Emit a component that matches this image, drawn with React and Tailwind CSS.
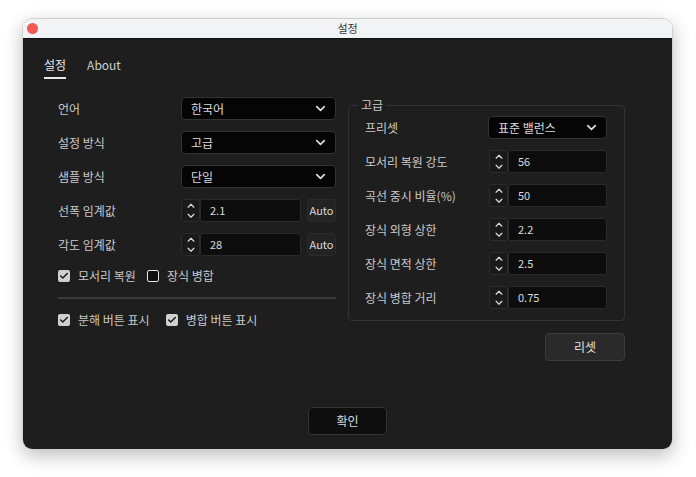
import { ChevronDown, ChevronUp, Check } from 'lucide-react';

const font = { fontFamily: '"Noto Sans CJK KR", "Noto Sans", "Liberation Sans", sans-serif' };

function Select({ value }) {
  return (
    <div className="flex-1 h-[23px] bg-[#050505] border border-[#333] rounded-[4px] flex items-center justify-between pl-[9px] pr-[7px]">
      <span className="text-[12px] text-[#dcdcdc]">{value}</span>
      <ChevronDown size={15} strokeWidth={2.6} className="text-[#e0e0e0]" />
    </div>
  );
}

function Spin({ value }) {
  return (
    <div className="flex-1 flex items-center h-[23px]">
      <div className="w-[19px] h-[23px] bg-[#1a1a1a] border border-[#2c2c2c] rounded-[3px] flex flex-col items-center justify-center">
        <ChevronUp size={12} strokeWidth={2.6} className="text-[#d8d8d8] -mb-[1px]" />
        <ChevronDown size={12} strokeWidth={2.6} className="text-[#d8d8d8] -mt-[1px]" />
      </div>
      <div className="flex-1 h-[23px] bg-[#0d0d0d] border border-[#2a2a2a] rounded-[3px] flex items-center pl-[9px]">
        <span className="text-[11px] text-[#dcdcdc]">{value}</span>
      </div>
    </div>
  );
}

function Row({ label, children, labelW = 'w-[123px]' }) {
  return (
    <div className="flex items-center h-[23px]">
      <div className={`${labelW} shrink-0 text-[12px] text-[#c9c9c9]`}>{label}</div>
      {children}
    </div>
  );
}

function Box({ checked, label }) {
  return (
    <div className="flex items-center">
      {checked ? (
        <div className="w-[12px] h-[12px] rounded-[2px] bg-[#cfcfcf] flex items-center justify-center">
          <Check size={10} strokeWidth={3.5} className="text-[#1a1a1a]" />
        </div>
      ) : (
        <div className="w-[12px] h-[12px] rounded-[2px] border-[1.5px] border-[#e5e5e5] bg-[#111]" />
      )}
      <span className="ml-[8px] text-[12px] text-[#c9c9c9]">{label}</span>
    </div>
  );
}

function AutoBtn() {
  return (
    <div className="ml-[6px] w-[29px] h-[23px] bg-[#232323] border border-[#2a2a2a] rounded-[3px] flex items-center justify-center text-[11px] text-[#dcdcdc]">
      Auto
    </div>
  );
}

export default function App() {
  return (
    <div className="w-[696px] h-[477px] bg-white pt-[18px] pl-[22px]" style={font}>
      <div className="w-[651px] h-[432px] rounded-[10px] overflow-hidden shadow-[0_6px_18px_rgba(0,0,0,0.25)] border border-[#cfcfcf]">
        {/* title bar */}
        <div className="h-[20px] bg-[#f2f3f4] relative flex items-center justify-center border-b border-[#111]">
          <div className="absolute left-[4px] top-[4px] w-[11px] h-[11px] rounded-full bg-[#f25a55]" />
          <span className="text-[11px] text-[#333]">설정</span>
        </div>

        <div className="h-[411px] bg-[#1e1e1e] flex flex-col">
          {/* tabs */}
          <div className="flex gap-[21px] pl-[21px] pt-[17px]">
            <div className="flex flex-col items-center">
              <span className="text-[12px] leading-[18px] text-[#e8e8e8]">설정</span>
              <div className="w-[22px] h-[2px] bg-[#eaeaea] mt-[3px]" />
            </div>
            <span className="text-[12px] leading-[18px] text-[#cfcfcf]">About</span>
          </div>

          <div className="flex-1 flex pl-[35px] pt-[18px] gap-[12px]">
            {/* left column */}
            <div className="w-[278px] flex flex-col">
              <div className="flex flex-col gap-[11px]">
                <Row label="언어"><Select value="한국어" /></Row>
                <Row label="설정 방식"><Select value="고급" /></Row>
                <Row label="샘플 방식"><Select value="단일" /></Row>
                <Row label="선폭 임계값"><Spin value="2.1" /><AutoBtn /></Row>
                <Row label="각도 임계값"><Spin value="28" /><AutoBtn /></Row>
              </div>
              <div className="flex gap-[11px] mt-[12px] h-[16px] items-center">
                <Box checked label="모서리 복원" />
                <Box label="장식 병합" />
              </div>
              <div className="h-[2px] bg-[#3a3a3a] mt-[13px]" />
              <div className="flex gap-[16px] mt-[13px] h-[16px] items-center">
                <Box checked label="분해 버튼 표시" />
                <Box checked label="병합 버튼 표시" />
              </div>
            </div>

            {/* right column */}
            <div className="w-[277px] flex flex-col">
              <div className="relative mt-[8px] border border-[#333] rounded-[4px] pl-[16px] pr-[17px] pt-[10px] pb-[11px] flex flex-col gap-[11px]">
                <span className="absolute -top-[9px] left-[9px] px-[3px] bg-[#1e1e1e] text-[12px] leading-[16px] text-[#c9c9c9]">고급</span>
                <Row label="프리셋" labelW="w-[123px]"><Select value="표준 밸런스" /></Row>
                <Row label="모서리 복원 강도" labelW="w-[124px]"><Spin value="56" /></Row>
                <Row label="곡선 중시 비율(%)" labelW="w-[124px]"><Spin value="50" /></Row>
                <Row label="장식 외형 상한" labelW="w-[124px]"><Spin value="2.2" /></Row>
                <Row label="장식 면적 상한" labelW="w-[124px]"><Spin value="2.5" /></Row>
                <Row label="장식 병합 거리" labelW="w-[124px]"><Spin value="0.75" /></Row>
              </div>
              <div className="self-end mt-[12px] w-[80px] h-[28px] bg-[#2a2a2a] border border-[#3c3c3c] rounded-[4px] flex items-center justify-center text-[12px] text-[#e0e0e0]">
                리셋
              </div>
            </div>
          </div>

          <div className="flex justify-center pb-[15px]">
            <div className="w-[79px] h-[28px] bg-[#0f0f0f] border border-[#333] rounded-[4px] flex items-center justify-center text-[12px] text-[#dcdcdc]">
              확인
            </div>
          </div>
        </div>
      </div>
    </div>
  );
}
